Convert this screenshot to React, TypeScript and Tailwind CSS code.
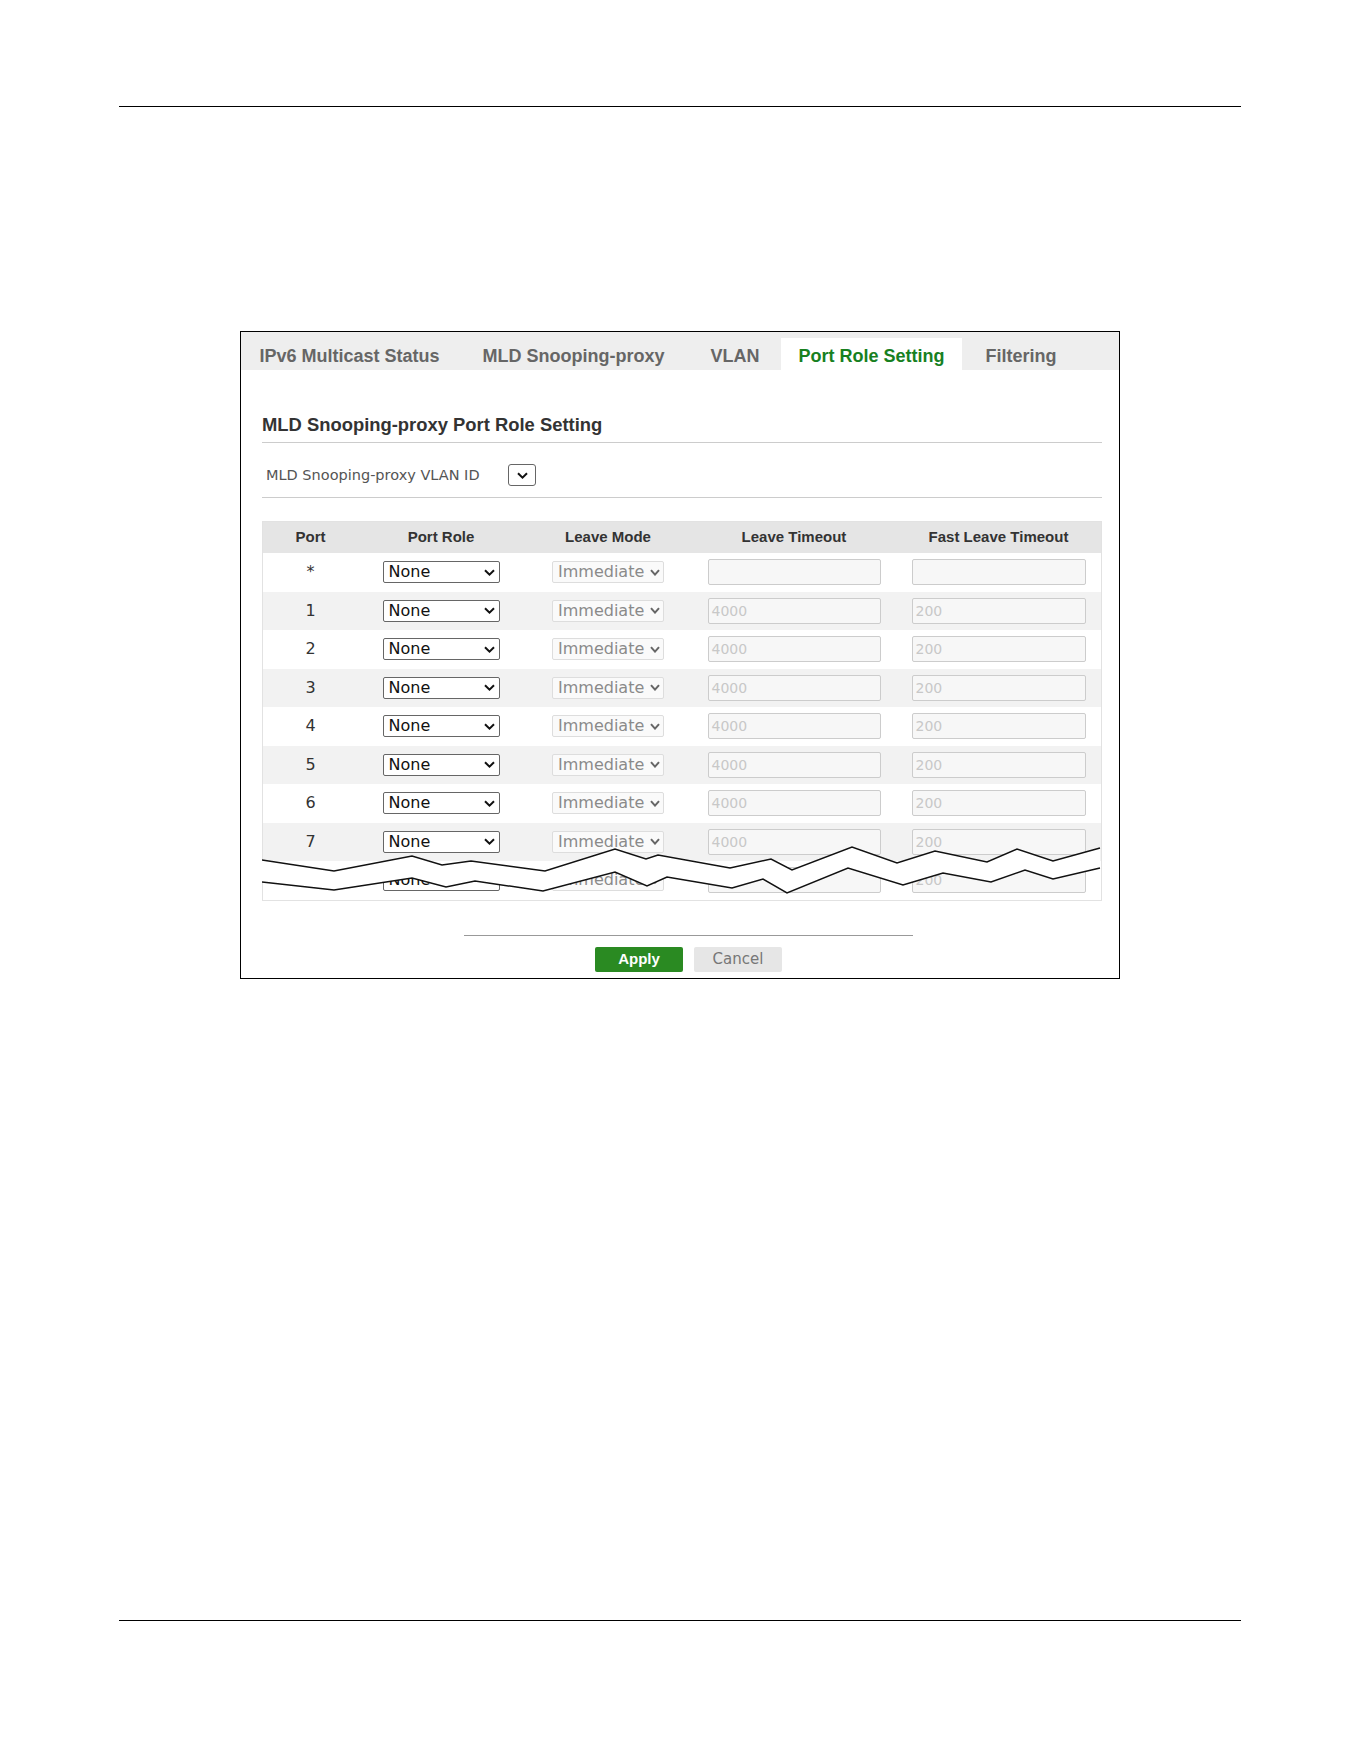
import { FC, ReactElement } from "react";

const bold = { fontFamily: '"Liberation Sans", Arial, sans-serif' };
const body = { fontFamily: '"DejaVu Sans", Verdana, sans-serif' };

const Chevron: FC<{ w: number; color: string }> = ({ w, color }) => (
    <svg width={w} height={7} viewBox={`0 0 ${w} 7`}>
        <polyline
            points={`1,1.2 ${w / 2},5.6 ${w - 1},1.2`}
            fill="none"
            stroke={color}
            strokeWidth="2"
        />
    </svg>
);

const tabs = [
    { label: "IPv6 Multicast Status", w: "w-[217px]" },
    { label: "MLD Snooping-proxy", w: "w-[231px]" },
    { label: "VLAN", w: "w-[92px]" },
    { label: "Port Role Setting", w: "w-[181px]", active: true },
    { label: "Filtering", w: "w-[118px]" },
];

const rows = ["*", "1", "2", "3", "4", "5", "6", "7", "8"];

const topLine =
    "262,860 334,871 412,856 442,865 471,861 545,871 615,849 646,859 658,855 730,868 771,859 792,870 852,847 897,863 935,851 987,862 1017,849 1053,861 1100,848";
const bottomLine =
    "262,882 334,890 412,878 446,887 475,881 543,891 615,872 647,886 667,877 732,888 763,879 787,893 848,868 903,885 943,873 991,882 1025,870 1053,879 1100,868";

const PortRow: FC<{ port: string; idx: number }> = ({ port, idx }) => {
    const first = port === "*";
    return (
        <div
            className={`grid grid-cols-[95px_166px_168px_204px_205px] h-[38.5px] ${
                idx % 2 === 1 ? "bg-[#f2f2f2]" : "bg-white"
            }`}
        >
            <div className="flex items-center justify-center text-[16px] text-[#333]" style={body}>
                {port}
            </div>
            <div className="flex items-center justify-center">
                <div className="flex items-center justify-between w-[117px] h-[22px] border border-[#666] rounded-[2px] bg-white pl-[5px] pr-[4px]">
                    <span className="text-[16px] leading-none text-[#111]" style={body}>None</span>
                    <Chevron w={11} color="#111" />
                </div>
            </div>
            <div className="flex items-center justify-center">
                <div className="flex items-center justify-between w-[112px] h-[22px] border border-[#dddddd] rounded-[2px] bg-[#fafafa] pl-[5px] pr-[3px]">
                    <span className="text-[16px] leading-none text-[#8a8a8a]" style={body}>Immediate</span>
                    <Chevron w={10} color="#666" />
                </div>
            </div>
            <div className="flex items-center justify-center">
                <div className="flex items-center w-[173px] h-[26px] border border-[#cccccc] rounded-[2px] bg-[#f7f7f7] pl-[3px]">
                    <span className="text-[14px] leading-none text-[#c8c8c8]" style={body}>{first ? "" : "4000"}</span>
                </div>
            </div>
            <div className="flex items-center justify-center">
                <div className="flex items-center w-[174px] h-[26px] border border-[#cccccc] rounded-[2px] bg-[#f7f7f7] pl-[3px]">
                    <span className="text-[14px] leading-none text-[#c8c8c8]" style={body}>{first ? "" : "200"}</span>
                </div>
            </div>
        </div>
    );
};

export default function App(): ReactElement {
    return (
        <div className="relative w-[1361px] h-[1761px] bg-white overflow-hidden">
            <div className="pt-[106px]">
                <div className="ml-[119px] w-[1122px] h-px bg-black" />
            </div>

            {/* panel */}
            <div className="mt-[224px] ml-[240px] w-[880px] h-[648px] border border-black box-border">
                <div className="flex items-end h-[38px] bg-[#eeeeee]">
                    {tabs.map((t) => (
                        <div
                            key={t.label}
                            className={`${t.w} flex items-end justify-center pb-[5px] ${
                                t.active ? "h-[32px] bg-white text-[#17801f]" : "h-full text-[#666]"
                            }`}
                        >
                            <span className="text-[18px] leading-[18px] font-bold" style={bold}>
                                {t.label}
                            </span>
                        </div>
                    ))}
                </div>

                <div className="pl-[21px] pr-[17px]">
                    <div
                        className="mt-[46px] pb-[8px] border-b border-[#cccccc] text-[18.4px] leading-[18px] font-bold text-[#333]"
                        style={bold}
                    >
                        MLD Snooping-proxy Port Role Setting
                    </div>

                    <div className="flex items-center pt-[21px] pb-[11px] border-b border-[#cccccc]">
                        <span className="w-[246px] pl-[4px] text-[14.5px] leading-none text-[#555]" style={body}>
                            MLD Snooping-proxy VLAN ID
                        </span>
                        <div className="flex items-center justify-center w-[28px] h-[22px] border border-[#666] rounded-[3px]">
                            <Chevron w={11} color="#111" />
                        </div>
                    </div>

                    <div className="relative mt-[23px]">
                        <div className="border border-[#e2e2e2]">
                            <div
                                className="grid grid-cols-[95px_166px_168px_204px_205px] h-[31px] bg-[#e5e5e5] text-[15px] font-bold text-[#333]"
                                style={bold}
                            >
                                <div className="flex items-center justify-center">Port</div>
                                <div className="flex items-center justify-center">Port Role</div>
                                <div className="flex items-center justify-center">Leave Mode</div>
                                <div className="flex items-center justify-center">Leave Timeout</div>
                                <div className="flex items-center justify-center">Fast Leave Timeout</div>
                            </div>
                            {rows.map((p, i) => (
                                <PortRow key={p} port={p} idx={i} />
                            ))}
                        </div>

                        {/* torn-page break */}
                        <svg
                            className="absolute left-0 top-0"
                            width={840}
                            height={378}
                            viewBox="262 521 840 378"
                        >
                            <polygon
                                points={`${topLine} ${bottomLine.split(" ").reverse().join(" ")}`}
                                fill="white"
                            />
                            <polyline points={topLine} fill="none" stroke="#111" strokeWidth="1.5" />
                            <polyline points={bottomLine} fill="none" stroke="#111" strokeWidth="1.5" />
                        </svg>
                    </div>

                    <div className="mt-[34px] ml-[202px] w-[449px] h-px bg-[#999]" />
                    <div className="flex gap-[11px] mt-[11px] ml-[333px]">
                        <button
                            className="w-[88px] h-[25px] rounded-[2px] bg-[#2a8a22] text-white text-[15px] font-bold"
                            style={bold}
                        >
                            Apply
                        </button>
                        <button
                            className="w-[88px] h-[25px] rounded-[2px] bg-[#e6e6e6] text-[#777] text-[15px]"
                            style={body}
                        >
                            Cancel
                        </button>
                    </div>
                </div>
            </div>

            <div className="mt-[641px] ml-[119px] w-[1122px] h-px bg-black" />
        </div>
    );
}
